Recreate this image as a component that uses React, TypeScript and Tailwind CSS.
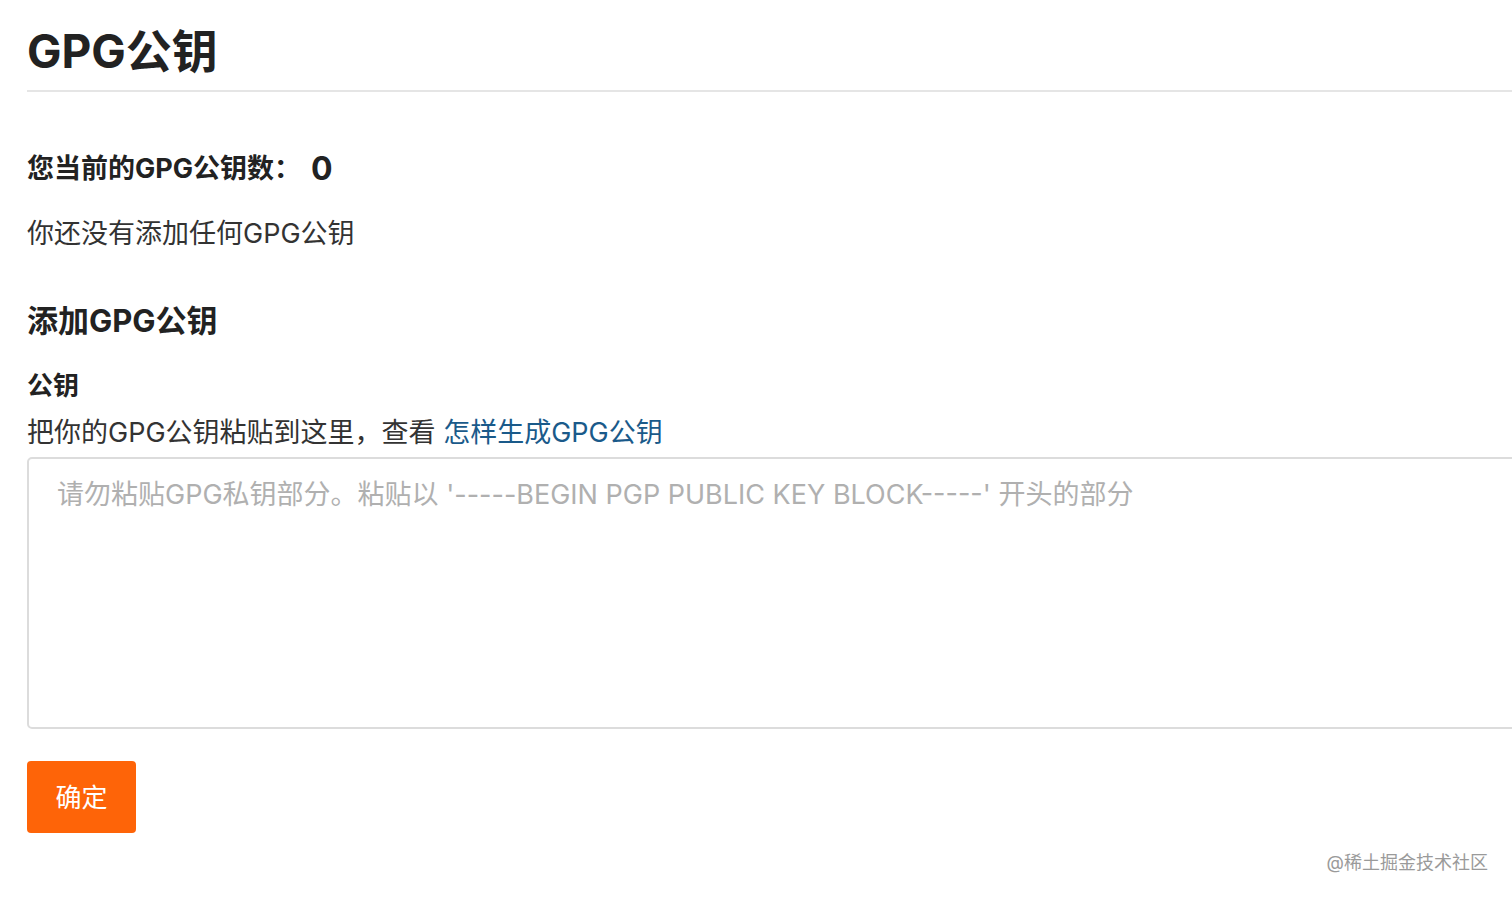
export default function App() {
  return (
    <div
      className="min-h-[897px] bg-white pl-[27px] text-[#333]"
      style={{ fontFamily: 'Inter, "Noto Sans CJK SC", sans-serif' }}
    >
      {/* Header */}
      <div className="border-b-2 border-[#e5e5e5] pt-[22px] pb-[10px]">
        <h1 className="text-[46px] font-bold leading-[58px] text-[#222]">GPG公钥</h1>
      </div>

      {/* Count */}
      <div className="mt-[59px] flex items-center text-[27px] font-bold leading-[36px] text-[#222]">
        <span>您当前的GPG公钥数：</span>
        <span className="ml-[10px] text-[32px]">0</span>
      </div>
      <p className="mt-[29px] text-[27px] leading-[36px] text-[#333]">你还没有添加任何GPG公钥</p>

      {/* Add key */}
      <h2 className="mt-[49px] text-[31px] font-bold leading-[40px] text-[#222]">添加GPG公钥</h2>
      <div className="mt-[27px] text-[26px] font-bold leading-[36px] text-[#222]">公钥</div>
      <p className="mt-[11px] text-[27px] leading-[36px] text-[#333]">
        把你的GPG公钥粘贴到这里，查看 <a className="text-[#1a5a8a]">怎样生成GPG公钥</a>
      </p>
      <textarea
        className="mt-[6px] block h-[272px] w-[calc(100%+20px)] resize-none rounded-[5px] border-2 border-[#dcdcdc] px-[28px] py-[16px] text-[27px] leading-[40px] placeholder:text-[#b0b0b0] outline-none"
        placeholder="请勿粘贴GPG私钥部分。粘贴以 '-----BEGIN PGP PUBLIC KEY BLOCK-----' 开头的部分"
      />

      {/* Submit */}
      <button className="mt-[32px] h-[72px] w-[109px] rounded-[4px] bg-[#fe6408] text-[26px] text-white">确定</button>

      <div className="flex justify-end pr-[24px] pt-[16px] text-[18px] text-[#9a9a9a]">@稀土掘金技术社区</div>
    </div>
  );
}
